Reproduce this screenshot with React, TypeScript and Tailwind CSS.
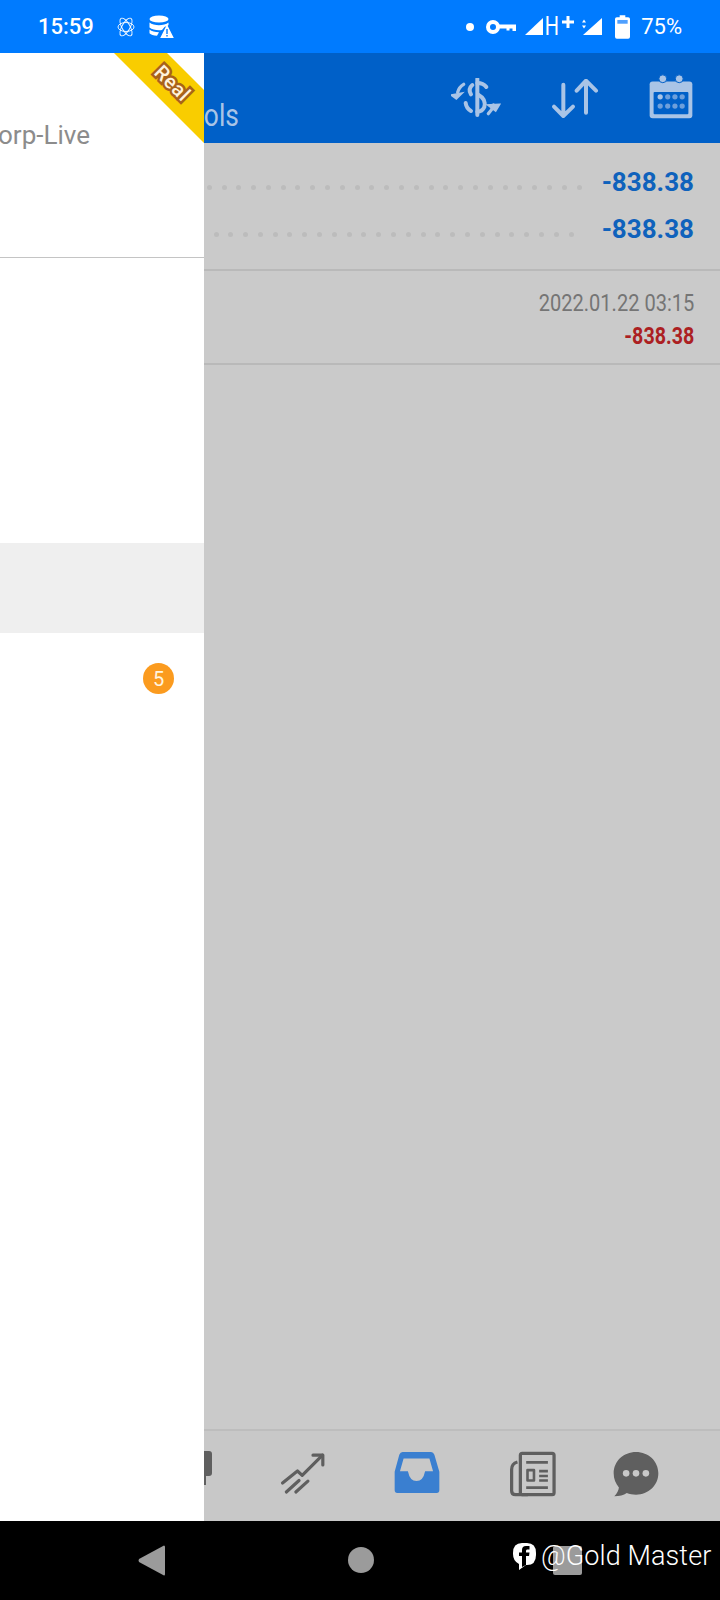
const ICON = "#a9c4e6";
const GREY = "#5f5f5f";

function Dots({ count }: { count: number }) {
  return (
    <div className="flex gap-[9.8px]">
      {Array.from({ length: count }).map((_, i) => (
        <span key={i} className="h-[5px] w-[5px] shrink-0 rounded-full bg-[#bcbcbc]" />
      ))}
    </div>
  );
}

function StatusBar() {
  return (
    <div className="flex h-[53px] shrink-0 items-center bg-[#007bff] pl-[38px] text-white">
      <span className="w-[79px] text-[22px] leading-none font-medium">15:59</span>
      <svg width="18" height="22" viewBox="0 0 18 22" fill="none" stroke="white" strokeWidth="0.9">
        <ellipse cx="9" cy="11" rx="4" ry="10" transform="rotate(-30 9 11)" />
        <ellipse cx="9" cy="11" rx="4" ry="10" transform="rotate(30 9 11)" />
        <ellipse cx="9" cy="11" rx="8" ry="4.5" />
      </svg>
      <svg className="ml-[14px]" width="25" height="24" viewBox="0 0 25 24" fill="white">
        <ellipse cx="10" cy="4" rx="9.5" ry="3.6" />
        <path d="M0.5 7.5c2 2 6 2.7 9.5 2.7s7.500-.7 9.500-2.700v2.600c-1 1-2.500 1.500-4 1.900l-2.500 3c-1 .1-2 .2-3 .2-3.500 0-7.500-.7-9.500-2.700z" />
        <path d="M0.500 14.500c2 2 5.500 2.600 9.500 2.700l-2 3.600c-3.500-.3-6-1-7.500-2.500z" />
        <path fillRule="evenodd" d="M18 9.500l6.800 13.500H11.200zM17.300 14v5h1.400v-5zM17.300 20v1.500h1.400V20z" />
      </svg>
      <div className="ml-auto flex items-center pr-[38px]">
        <span className="h-[8px] w-[8px] rounded-full bg-white" />
        <svg className="ml-[12px]" width="30" height="14" viewBox="0 0 30 14" fill="none">
          <circle cx="7" cy="7" r="5" stroke="white" strokeWidth="4" />
          <path d="M11 4.500H30V11H26.500V8.500H23.500V10.500H20.500V8.500H11z" fill="white" />
        </svg>
        <svg className="ml-[9px]" width="18" height="17" viewBox="0 0 18 17" fill="white">
          <path d="M18 0V17H0z" />
        </svg>
        <span className="origin-center scale-x-[0.8] text-[25px] leading-none font-normal">H</span>
        <svg className="mb-[9px] ml-[1px]" width="12" height="12" viewBox="0 0 12 12" fill="white">
          <path d="M4.500 0h3v4.500H12v3H7.500V12h-3V7.500H0v-3h4.500z" />
        </svg>
        <svg className="ml-[7px]" width="21" height="17" viewBox="0 0 21 17" fill="white">
          <path d="M21 0V17H2z" />
          <path d="M3 1.500L5 4.500H1zM3 10.500L1 7.500h4z" />
        </svg>
        <svg className="ml-[13px]" width="15" height="24" viewBox="0 0 16 25">
          <path d="M5 0h6v2h3a2 2 0 0 1 2 2v19a2 2 0 0 1-2 2H2a2 2 0 0 1-2-2V4a2 2 0 0 1 2-2h3z" fill="white" />
          <rect x="2.500" y="5" width="11" height="4" fill="#4fa0ff" />
        </svg>
        <span className="ml-[11px] text-[22px] leading-none">75%</span>
      </div>
    </div>
  );
}

function Header() {
  return (
    <div className="flex h-[90px] shrink-0 items-start bg-[#0060c8]">
      <div className="mt-[46px] flex w-[239px] justify-end">
        <span className="origin-right scale-x-[0.85] text-[31px] leading-[34px] whitespace-nowrap text-[#a9c4e6]">
          Symbols
        </span>
      </div>
      <svg className="mt-[25px] ml-[212px]" width="50" height="40" viewBox="278 235 150 120" fill="none" stroke={ICON} strokeLinecap="round">
        <path d="M357 238V346" strokeWidth="12" />
        <path d="M357 250Q375 250 384 262M342 256Q328 268 338 284M360 285Q384 298 378 322Q372 336 357 336M322 310Q324 326 338 334" strokeWidth="12" />
        <path d="M316 254Q302 262 298 278" strokeWidth="10" />
        <path d="M278 286L312 280L294 298Z" fill={ICON} strokeWidth="5" />
        <path d="M390 342Q402 330 406 316" strokeWidth="10" />
        <path d="M424 314L388 316L412 334Z" fill={ICON} strokeWidth="5" />
      </svg>
      <svg className="mt-[26px] ml-[50px]" width="48" height="40" viewBox="570 235 144 120" fill="none" stroke={ICON} strokeWidth="12" strokeLinecap="round" strokeLinejoin="round">
        <path d="M607 252V344M579 318L607 346L636 318" />
        <path d="M675 336V242M647 270L675 240L705 270" />
      </svg>
      <svg className="mt-[21px] ml-[50px]" width="44" height="45" viewBox="866 222 134 136">
        <rect x="868" y="244" width="130" height="112" rx="9" fill={ICON} />
        <rect x="880" y="276" width="106" height="68" rx="3" fill="#0060c8" />
        <circle cx="908" cy="236" r="12" fill={ICON} stroke="#0060c8" strokeWidth="3" />
        <circle cx="958" cy="236" r="12" fill={ICON} stroke="#0060c8" strokeWidth="3" />
        <g fill="#6d9fdb">
          <circle cx="900" cy="291" r="8" fill={ICON} />
          <circle cx="923" cy="291" r="8" />
          <circle cx="945" cy="291" r="8" />
          <circle cx="967" cy="291" r="8" />
          <circle cx="900" cy="319" r="8" />
          <circle cx="923" cy="319" r="8" />
          <circle cx="945" cy="319" r="8" />
          <circle cx="967" cy="319" r="8" />
        </g>
      </svg>
    </div>
  );
}

function BalanceRow({ dots, gap }: { dots: number; gap: string }) {
  return (
    <div className="flex h-[47px] items-center justify-end">
      <div className={`mt-[12px] ${gap}`}>
        <Dots count={dots} />
      </div>
      <span className="text-[26px] leading-none font-bold text-[#0f62bc]">-838.38</span>
    </div>
  );
}

function Deal() {
  return (
    <div className="flex h-[94px] flex-col items-end border-b-2 border-[#b9b9b9] pt-[19px] pr-[26px]">
      <span className="origin-right scale-x-[0.835] text-[24px] leading-[26px] text-[#757575]">2022.01.22 03:15</span>
      <span className="mt-[7px] origin-right scale-x-[0.82] text-[24px] leading-[26px] font-bold text-[#ac1f22]">-838.38</span>
    </div>
  );
}

function BottomTabs() {
  return (
    <div className="flex h-[92px] shrink-0 items-start border-t-2 border-[#bdbdbd] bg-[#c8c8c8] pt-[20px]">
      <div className="ml-[166px] h-[43px] w-[46px]">
        <svg className="ml-[25px]" width="21" height="34" viewBox="0 0 21 34" fill={GREY}>
          <path d="M0 0H18Q21 0 21 3V22Q21 25 18 25H15V34H0z" />
        </svg>
      </div>
      <div className="ml-[68px] flex w-[46px] justify-center">
        <svg width="48" height="47" viewBox="260 125 145 140" fill="none" stroke={GREY} strokeWidth="10" strokeLinecap="round" strokeLinejoin="round">
          <path d="M268 222L315 184L330 198L394 134" />
          <path d="M364 134H395V165" />
          <path d="M280 250L320 214M310 250L348 216" />
        </svg>
      </div>
      <div className="ml-[68px] flex w-[46px] justify-center">
        <svg width="46" height="43" viewBox="604 128 139 128">
          <path
            fillRule="evenodd"
            fill="#3a7fd0"
            d="M630 130H716Q723 130 726 138L741 190V245Q741 254 733 254H614Q606 254 606 245V190L620 138Q623 130 630 130ZM633 150L622 188H646Q652 218 672 218Q692 218 698 188H722L711 150Z"
          />
        </svg>
      </div>
      <div className="ml-[70px] flex w-[46px] justify-center">
        <svg width="47" height="46" viewBox="945 122 142 140" fill="none" stroke={GREY} strokeWidth="10" strokeLinejoin="round">
          <rect x="977" y="128" width="104" height="128" rx="6" />
          <path d="M968 155Q950 160 950 178V244Q950 256 962 256H1000" />
          <path d="M995 156H1062M1035 183H1062M1035 198H1062M1035 212H1062M995 234H1062" strokeWidth="8" />
          <rect x="999" y="180" width="20" height="32" strokeWidth="8" />
        </svg>
      </div>
      <div className="ml-[57px] flex w-[46px] justify-center">
        <svg width="47" height="46" viewBox="1250 122 140 138">
          <path d="M1320 124C1358 124 1388 152 1388 189C1388 226 1358 254 1320 254C1310 254 1300 252 1292 249C1282 256 1270 259 1254 259C1262 250 1267 242 1268 232C1258 220 1252 206 1252 189C1252 152 1282 124 1320 124Z" fill={GREY} />
          <circle cx="1290" cy="189" r="10" fill="#c8c8c8" />
          <circle cx="1320" cy="189" r="10" fill="#c8c8c8" />
          <circle cx="1350" cy="189" r="10" fill="#c8c8c8" />
        </svg>
      </div>
    </div>
  );
}

function NavBar() {
  return (
    <div className="relative flex h-[79px] shrink-0 items-center bg-black pb-[1px]">
      <svg className="ml-[138px]" width="27" height="31" viewBox="0 0 27 31" fill="#9b9b9b">
        <path d="M26 0.500Q27 0.500 27 2V29Q27 30.500 26 30.500L1 17Q0 15.500 1 14Z" />
      </svg>
      <span className="ml-[183px] h-[26px] w-[26px] rounded-full bg-[#9b9b9b]" />
      <span className="ml-[179px] h-[29px] w-[29px] rounded-[2px] bg-[#9b9b9b]" />
      <div className="absolute top-[20px] left-[512px] flex items-center text-white">
        <svg width="25" height="28" viewBox="0 0 25 28">
          <path d="M10 1H15Q24 1 24 11V13Q24 23 15 23H14L7 28V22Q1 19 1 12V11Q1 1 10 1Z" fill="white" />
          <path d="M10 25V14H7V10.500H10V8Q10 4 14 4H17.500V7.500H15Q14 7.500 14 9V10.500H17.500L17 14H14V23Z" fill="black" />
        </svg>
        <span className="ml-[4px] text-[27px] leading-[30px] font-light tracking-[0.1px] whitespace-nowrap">@Gold Master</span>
      </div>
    </div>
  );
}

function Drawer() {
  return (
    <div className="absolute top-[53px] bottom-[79px] left-0 flex w-[204px] flex-col overflow-hidden bg-white">
      <div className="relative h-[205px] shrink-0 border-b border-[#c4c4c4]">
        <div className="-ml-[2px] pt-[67px]">
          <span className="text-[26px] leading-[30px] whitespace-nowrap text-[#8c8c8c]">orp-Live</span>
        </div>
        <div className="absolute top-0 right-0 h-[90px] w-[90px] bg-[#f9cd00] [clip-path:polygon(0_0,53px_0,90px_37px,90px_90px)]" />
        <span className="absolute top-[20px] right-[11px] rotate-45 text-[20px] leading-none font-medium tracking-[0.5px] text-[#fff3dc] [-webkit-text-stroke:5px_#a9621a] [paint-order:stroke_fill]">
          Real
        </span>
      </div>
      <div className="mt-[285px] h-[90px] shrink-0 bg-[#efefef]" />
      <div className="mt-[30px] flex justify-end pr-[30px]">
        <span className="flex h-[31px] w-[31px] items-center justify-center rounded-full bg-[#fb9b1f] text-[20px] leading-none text-[#fff5e0]">
          5
        </span>
      </div>
    </div>
  );
}

export default function App() {
  return (
    <div
      className="relative flex h-[1600px] w-[720px] flex-col overflow-hidden bg-[#cacaca]"
      style={{ fontFamily: 'Roboto, "Noto Sans", sans-serif' }}
    >
      <StatusBar />
      <Header />
      <main className="flex flex-1 flex-col">
        <div className="h-[128px] border-b-2 border-[#b9b9b9] pt-[15px] pr-[26px]">
          <BalanceRow dots={26} gap="mr-[20px]" />
          <BalanceRow dots={25} gap="mr-[28px]" />
        </div>
        <Deal />
      </main>
      <BottomTabs />
      <NavBar />
      <Drawer />
    </div>
  );
}
